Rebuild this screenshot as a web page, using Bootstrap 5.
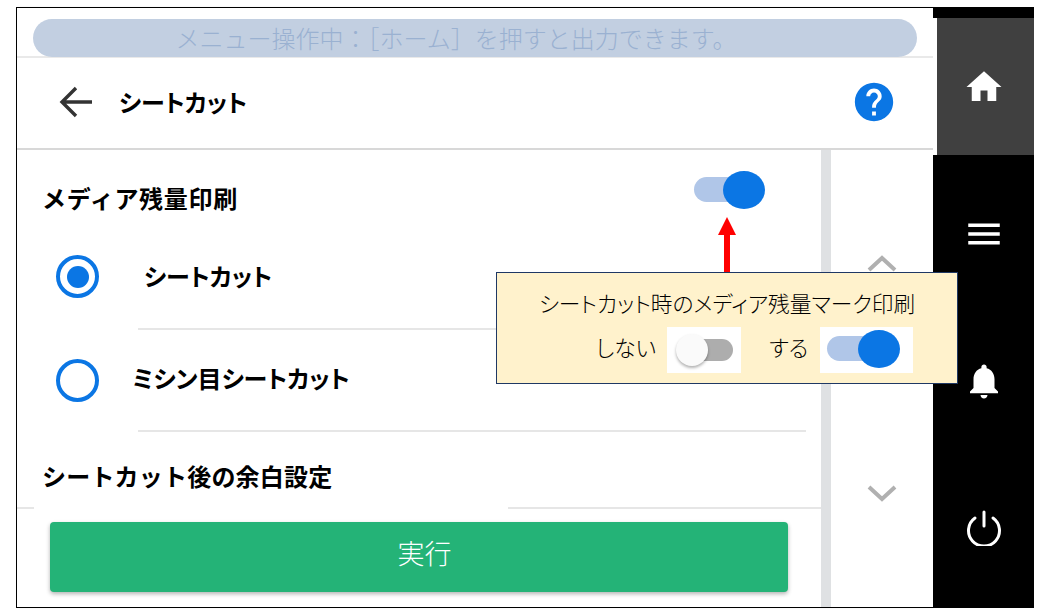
<!DOCTYPE html>
<html lang="ja">
<head>
<meta charset="utf-8">
<title>シートカット</title>
<link href="https://cdn.jsdelivr.net/npm/bootstrap@5.3.0/dist/css/bootstrap.min.css" rel="stylesheet">
<style>
html,body{background:#fff;margin:0;height:100%;overflow:hidden}
body{font-family:"Noto Sans CJK JP","Liberation Sans",sans-serif;font-feature-settings:"palt";color:#000}
.frame{position:relative;width:1018px;height:601px;margin:7px 0 0 16px;border:1px solid #000;border-right:0;display:flex;overflow:visible}
.screen{width:916px;display:flex;flex-direction:column;flex:none;box-shadow:1px 0 3px rgba(0,0,0,.12)}
.bannerrow{height:50px;padding:11px 16px 0;border-bottom:2px solid #e9e9e9;flex:none}
.bannerpill{height:38px;background:#c2cfe1;border-radius:19px;color:#9ab1d1;font-size:24px;line-height:37px;text-align:center;padding-right:38px;font-weight:300;white-space:nowrap;font-feature-settings:normal}
.headrow{height:92px;border-bottom:2px solid #d8d8d8;flex:none;padding:0 36px 2px 42px}
.headtitle{font-size:24px;font-weight:700;margin-left:26px;line-height:1}
.bodyrow{flex:1;min-height:0}
.contentcol{width:804px;flex:none;position:relative;display:flex;flex-direction:column}
.scrolltrack{width:10px;flex:none;background:#dfe1e3}
.navcol{flex:1}
.rowtitle{font-size:24px;font-weight:700;line-height:1;white-space:nowrap}
.fulltext{font-feature-settings:normal;letter-spacing:.2px}
.toptitle{letter-spacing:.7px}
.sec1{height:73px;padding:36px 56px 0 25px}
.swtop{margin-top:-15px}
.radiorow{height:102px;padding:0 0 2px 39px;position:relative}
.radiorow::after{content:"";position:absolute;left:121px;right:15px;bottom:0;height:2px;background:#e6e6e6}
.radio1{height:107px;padding-bottom:0}
.radiodot{width:43px;height:43px;border-radius:50%;border:4px solid #0b76e4;flex:none;display:flex;align-items:center;justify-content:center}
.radiodot i{display:block;width:22px;height:22px;border-radius:50%;background:#0b76e4}
.gap1{margin-left:45px;margin-bottom:2px}
.gap2{margin-left:33px;margin-bottom:5px}
.sec3{height:75px;padding-top:32px;padding-left:25px;flex:none}
.footrow{flex:1;border-top:2px solid #e6e6e6;padding:13px 32px 14px 33px;position:relative}
.footgap{position:absolute;left:17px;width:474px;top:-2px;height:2px;background:#fff}
.runbtn{width:738px;height:70px;background:#24b377;color:#fff;border:0;border-radius:4px;font-size:27px;line-height:1;font-weight:300;box-shadow:0 2px 4px rgba(0,0,0,.3);padding:0 0 10px 11px}
.chevup{margin-top:104px}
.chevdown{margin-bottom:104px}
.sidebar{flex:1;background:#000;display:flex;flex-direction:column;padding-top:10px}
.sideitem{height:147px;display:flex;align-items:center;justify-content:center;flex:none}
.sideactive{height:137px;background:#404040;box-shadow:-4px 0 0 #fff;margin-left:4px;margin-bottom:5px;padding-right:4px}
.track{display:block;position:relative}
.sw-on{width:71px;height:38px}
.sw-on::before{content:"";position:absolute;left:0;top:6px;width:50px;height:25px;border-radius:13px;background:#b0c6e8}
.sw-on::after{content:"";position:absolute;left:29px;top:0;width:42px;height:38px;border-radius:50%;background:#0b76e4}
.callout{position:absolute;left:479px;top:264px;width:462px;height:112px;background:#fff2cc;border:1px solid #1f3864;text-align:center;font-size:21.7px;line-height:1;font-weight:300;z-index:3}
.calltitle{margin-top:19px;white-space:nowrap;height:33px}
.callrow{display:flex;align-items:center;position:absolute;top:54px;left:0;right:0;height:46px}
.calllabel{margin-bottom:6px}
.lab1{margin-left:99px}
.lab2{margin-left:28px}
.chip{background:#fff;height:46px;display:flex;align-items:center;justify-content:flex-start;margin-left:11px}
.chipoff{width:74px;padding-left:9px}
.chipon{width:93px;padding-left:7px;margin-left:12px}
.chipon .sw-on{width:73px;margin-top:-2px}
.chipon .sw-on::before{width:52px}
.chipon .sw-on::after{left:31px}
.sw-off{width:58px;height:32px}
.sw-off::before{content:"";position:absolute;left:10px;top:5px;width:47px;height:22px;border-radius:11px;background:#adadad}
.sw-off::after{content:"";position:absolute;left:0;top:0;width:32px;height:32px;border-radius:50%;background:#fafafa;box-shadow:0 2px 3px rgba(0,0,0,.3)}
.arrowover{position:absolute;left:701px;top:209px;z-index:2}
</style>
</head>
<body>
<div class="frame">
  <div class="screen">
    <div class="bannerrow"><div class="bannerpill">メニュー操作中：［ホーム］を押すと出力できます。</div></div>
    <div class="headrow d-flex align-items-center">
      <svg width="34" height="32" viewBox="0 0 34 32" fill="none" stroke="#333" stroke-width="3.4"><path d="M33 16H4M17 2 3 16l14 14"/></svg>
      <div class="headtitle">シートカット</div>
      <svg class="ms-auto" width="46" height="46" viewBox="0 0 24 24" fill="#0b76e4"><path d="M12 2C6.48 2 2 6.48 2 12s4.48 10 10 10 10-4.48 10-10S17.52 2 12 2zm1 17h-2v-2h2v2zm2.07-7.75l-.9.92C13.45 12.9 13 13.5 13 15h-2v-.5c0-1.1.45-2.1 1.17-2.83l1.24-1.26c.37-.36.59-.86.59-1.41 0-1.1-.9-2-2-2s-2 .9-2 2H8c0-2.21 1.79-4 4-4s4 1.79 4 4c0 .88-.36 1.68-.93 2.25z"/></svg>
    </div>
    <div class="bodyrow d-flex">
      <div class="contentcol">
        <div class="sec1 d-flex justify-content-between">
          <div class="rowtitle fulltext toptitle">メディア残量印刷</div>
          <span class="track sw-on swtop"></span>
        </div>
        <div class="radiorow radio1 d-flex align-items-center">
          <span class="radiodot"><i></i></span>
          <span class="rowtitle gap1">シートカット</span>
        </div>
        <div class="radiorow d-flex align-items-center">
          <span class="radiodot"></span>
          <span class="rowtitle gap2">ミシン目シートカット</span>
        </div>
        <div class="sec3 rowtitle fulltext">シートカット後の余白設定</div>
        <div class="footrow">
          <span class="footgap"></span>
          <button class="btn runbtn" type="button">実行</button>
        </div>
      </div>
      <div class="scrolltrack"></div>
      <div class="navcol d-flex flex-column align-items-center justify-content-between">
        <svg class="chevup" width="30" height="18" viewBox="0 0 30 18" fill="none" stroke="#b0b0b0" stroke-width="4"><path d="M2 16 15 4l13 12"/></svg>
        <svg class="chevdown" width="30" height="18" viewBox="0 0 30 18" fill="none" stroke="#b0b0b0" stroke-width="4"><path d="M2 2l13 12L28 2"/></svg>
      </div>
    </div>
  </div>
  <div class="sidebar">
    <div class="sideitem sideactive">
      <svg width="42" height="42" viewBox="0 0 24 24" fill="#fff"><path d="M10 20v-6h4v6h5v-8h3L12 3 2 12h3v8z"/></svg>
    </div>
    <div class="sideitem">
      <svg width="42" height="42" viewBox="0 0 24 24" fill="#fff"><path d="M3 18h18v-2H3v2zm0-5h18v-2H3v2zm0-7v2h18V6H3z"/></svg>
    </div>
    <div class="sideitem">
      <svg width="42" height="42" viewBox="0 0 24 24" fill="#fff"><path d="M12 22c1.1 0 2-.9 2-2h-4c0 1.1.89 2 2 2zm6-6v-5c0-3.07-1.64-5.64-4.5-6.32V4c0-.83-.67-1.5-1.5-1.5s-1.5.67-1.5 1.5v.68C7.63 5.36 6 7.92 6 11v5l-2 2v1h16v-1l-2-2z"/></svg>
    </div>
    <div class="sideitem">
      <svg width="36" height="36" viewBox="0 0 36 36" fill="none" stroke="#fff" stroke-width="3" stroke-linecap="round"><path d="M18 2v14M9 8a15.500 15.500 0 1 0 18 0"/></svg>
    </div>
  </div>
  <svg class="arrowover" width="18" height="56" viewBox="0 0 18 56" fill="#f00"><path d="M9 0l9 18h-6v38H6V18H0z"/></svg>
  <div class="callout">
    <div class="calltitle">シートカット時のメディア残量マーク印刷</div>
    <div class="callrow">
      <span class="calllabel lab1">しない</span>
      <span class="chip chipoff"><span class="track sw-off"></span></span>
      <span class="calllabel lab2">する</span>
      <span class="chip chipon"><span class="track sw-on"></span></span>
    </div>
  </div>
</div>
<script src="https://cdn.jsdelivr.net/npm/bootstrap@5.3.0/dist/js/bootstrap.bundle.min.js"></script>
</body>
</html>
